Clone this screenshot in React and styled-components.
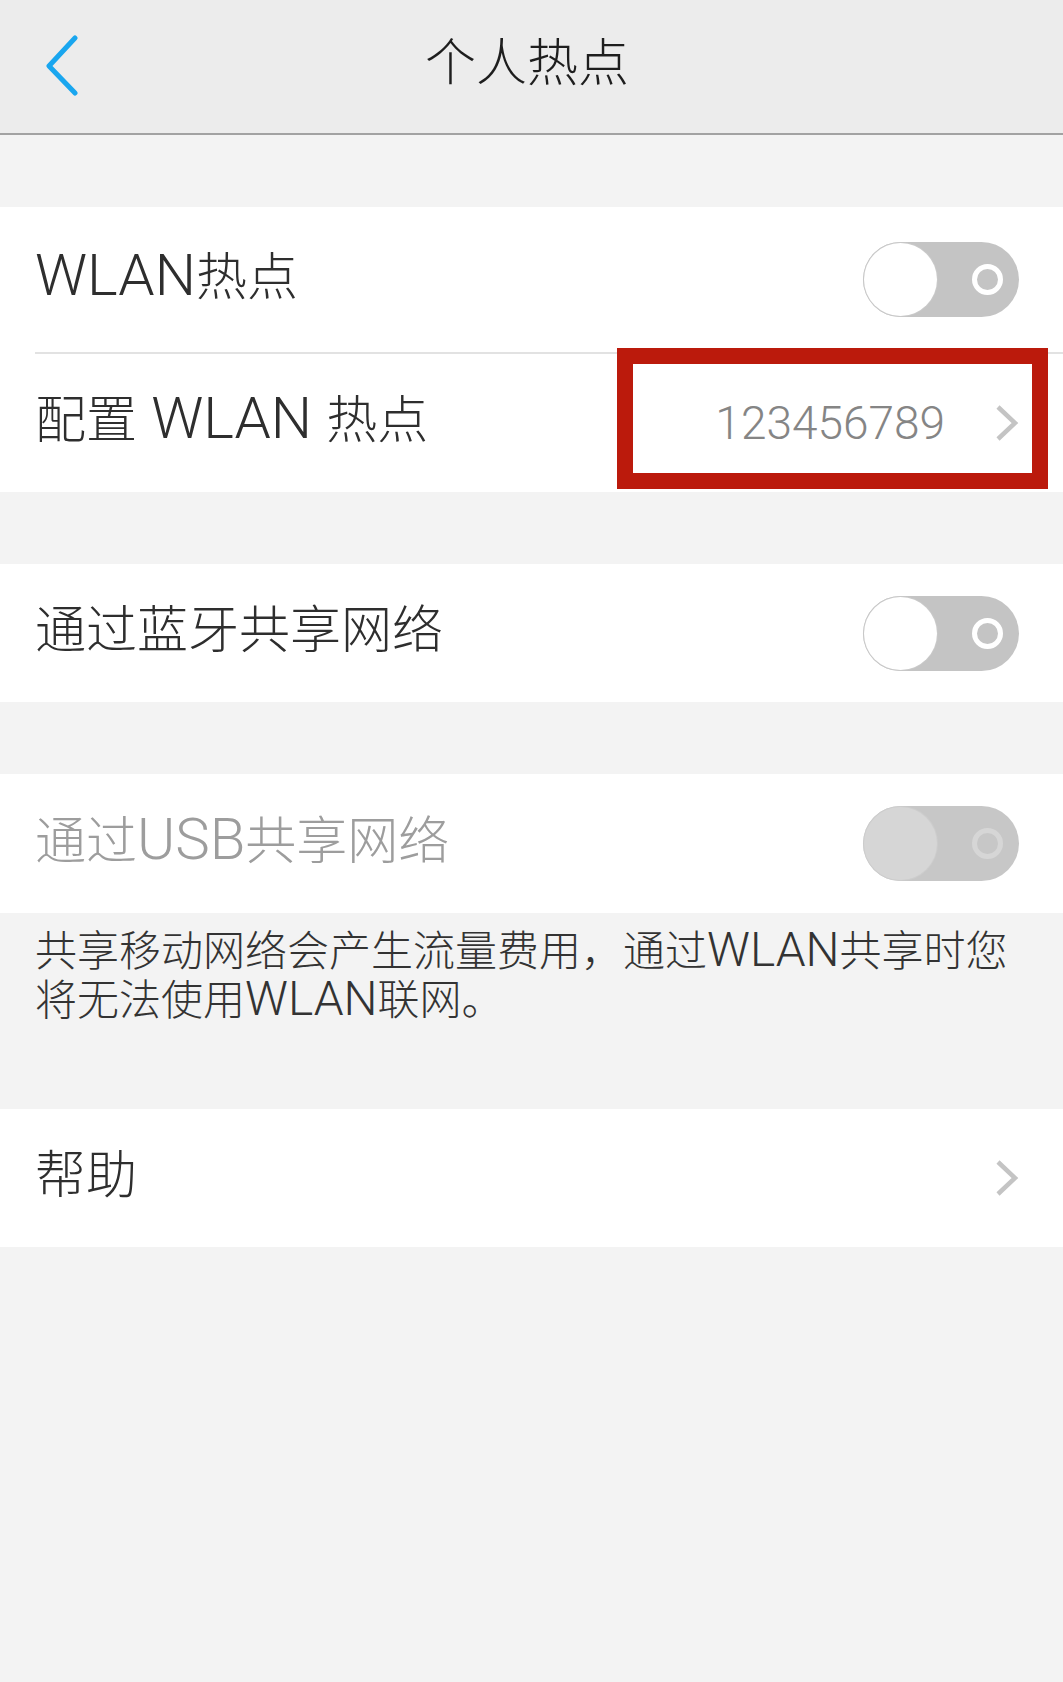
import React from "react";
import styled, { createGlobalStyle } from "styled-components";

const GlobalStyle = createGlobalStyle`
  html, body {
    margin: 0;
    padding: 0;
    background: #f3f3f3;
  }
  body {
    font-family: "Noto Sans CJK SC", "Noto Sans", sans-serif;
    -webkit-font-smoothing: antialiased;
  }
  * { box-sizing: border-box; }
`;

const Page = styled.div`
  width: 1063px;
  min-height: 1682px;
  background: #f3f3f3;
  display: flex;
  flex-direction: column;
`;

const Header = styled.header`
  height: 135px;
  background: #ececec;
  border-bottom: 2px solid #a2a2a2;
  display: grid;
  grid-template-columns: 1fr auto 1fr;
  align-items: center;
`;

const BackButton = styled.button`
  justify-self: start;
  margin-left: 44px;
  margin-top: -2px;
  padding: 0;
  border: 0;
  background: none;
  display: flex;
  cursor: pointer;
`;

const Title = styled.h1`
  margin: -16px 9px 0 0;
  font-size: 51px;
  font-weight: 300;
  color: #1e1e1e;
`;

const Section = styled.section`
  background: #ffffff;
  margin-top: ${(p) => p.$gap ?? 72}px;
  display: flex;
  flex-direction: column;
`;

const Row = styled.div`
  position: relative;
  height: ${(p) => p.$h ?? 138}px;
  padding: 0 44px 0 35px;
  display: flex;
  align-items: center;
  justify-content: space-between;
`;

const Label = styled.span`
  padding-bottom: 14px;
  font-size: 51px;
  font-weight: 300;
  color: ${(p) => (p.$disabled ? "#9d9d9d" : "#2e2e2e")};
  white-space: pre;
`;

/* Latin runs are set a little larger in a lighter grotesque, like the system font */
const Latin = styled.span`
  font-family: Roboto, "Liberation Sans", sans-serif;
  font-weight: 300;
  font-size: 1.14em;
  line-height: 0;
  white-space: pre;
`;

const Divider = styled.div`
  height: 2px;
  margin-left: 35px;
  background: #e2e2e2;
`;

const Trailing = styled.div`
  display: flex;
  align-items: center;
  gap: 50px;
`;

const Value = styled.span`
  font-family: Roboto, "Liberation Sans", sans-serif;
  font-size: 46px;
  font-weight: 300;
  color: #858585;
`;

const Switch = styled.div`
  position: relative;
  width: 156px;
  height: 75px;
  border-radius: 38px;
  background: ${(p) => (p.$disabled ? "#c7c7c7" : "#c4c4c4")};
  flex-shrink: 0;
`;

const Knob = styled.span`
  position: absolute;
  left: 1px;
  top: 1px;
  width: 73px;
  height: 73px;
  border-radius: 50%;
  background: ${(p) => (p.$disabled ? "#d6d6d6" : "#ffffff")};
  box-shadow: 0 0 0 1px ${(p) => (p.$disabled ? "#cdcdcd" : "#c9c9c9")};
`;

const Ring = styled.span`
  position: absolute;
  left: 109px;
  top: 22px;
  width: 31px;
  height: 31px;
  border-radius: 50%;
  border: 5px solid ${(p) => (p.$disabled ? "#d6d6d6" : "#ffffff")};
`;

const Note = styled.p`
  margin: 10px 0 0;
  padding: 0 30px 0 35px;
  font-size: 42px;
  font-weight: 300;
  line-height: 49px;
  color: #333333;
`;

const Highlight = styled.div`
  position: absolute;
  left: 617px;
  top: -6px;
  width: 431px;
  height: 141px;
  border: 16px solid #bb1a0c;
  pointer-events: none;
`;

const BackChevron = () => (
  <svg width="36" height="62" viewBox="0 0 36 62" fill="none">
    <polyline
      points="31,3 5,31 31,58"
      stroke="#19a6ef"
      strokeWidth="5"
      strokeLinecap="round"
      strokeLinejoin="round"
    />
  </svg>
);

const Chevron = () => (
  <svg width="24" height="38" viewBox="0 0 24 38" fill="none">
    <polyline
      points="3,3 20,19 3,35"
      stroke="#c4c4c4"
      strokeWidth="4.5"
      strokeLinecap="butt"
      strokeLinejoin="miter"
    />
  </svg>
);

const Toggle = ({ disabled }) => (
  <Switch $disabled={disabled}>
    <Knob $disabled={disabled} />
    <Ring $disabled={disabled} />
  </Switch>
);

export default function App() {
  return (
    <>
      <GlobalStyle />
      <Page>
        <Header>
          <BackButton aria-label="返回">
            <BackChevron />
          </BackButton>
          <Title>个人热点</Title>
          <span />
        </Header>

        <Section>
          <Row $h={145}>
            <Label>
              <Latin>WLAN</Latin>热点
            </Label>
            <Toggle />
          </Row>
          <Divider />
          <Row $h={138}>
            <Label>
              配置<Latin> WLAN </Latin>热点
            </Label>
            <Trailing>
              <Value>123456789</Value>
              <Chevron />
            </Trailing>
            <Highlight />
          </Row>
        </Section>

        <Section>
          <Row>
            <Label>通过蓝牙共享网络</Label>
            <Toggle />
          </Row>
        </Section>

        <Section>
          <Row $h={139}>
            <Label $disabled>
              通过<Latin>USB</Latin>共享网络
            </Label>
            <Toggle disabled />
          </Row>
        </Section>

        <Note>
          共享移动网络会产生流量费用，通过<Latin>WLAN</Latin>共享时您
          <br />
          将无法使用<Latin>WLAN</Latin>联网。
        </Note>

        <Section $gap={88}>
          <Row>
            <Label>帮助</Label>
            <Chevron />
          </Row>
        </Section>
      </Page>
    </>
  );
}
